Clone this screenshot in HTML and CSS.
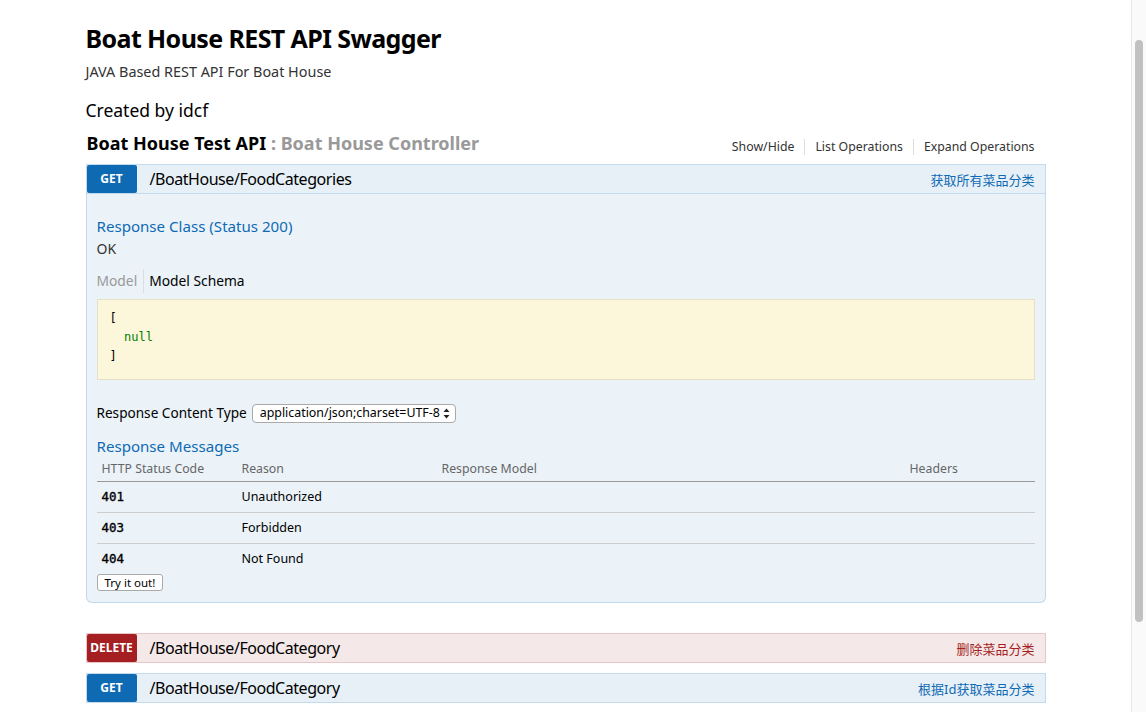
FILE: index.html
```html
<!DOCTYPE html>
<html>
<head>
<meta charset="utf-8">
<title>Boat House REST API Swagger</title>
<link rel="stylesheet" href="styles.css">
</head>
<body>
<div class="page">
  <div class="main">
    <div class="container">
      <h1 class="title">Boat House REST API Swagger</h1>
      <div class="desc">JAVA Based REST API For Boat House</div>
      <div class="created">Created by idcf</div>

      <div class="resource-head">
        <h2 class="resource-title">Boat House Test API <span class="sub">: Boat House Controller</span></h2>
        <ul class="options">
          <li>Show/Hide</li>
          <li>List Operations</li>
          <li>Expand Operations</li>
        </ul>
      </div>

      <div class="op op-get op-open">
        <div class="op-bar">
          <span class="verb">GET</span>
          <span class="path">/BoatHouse/FoodCategories</span>
          <span class="summary">获取所有菜品分类</span>
        </div>
        <div class="op-body">
          <h4 class="h4">Response Class (Status 200)</h4>
          <div class="ok">OK</div>
          <div class="tabs">
            <span class="tab tab-off">Model</span>
            <span class="tab tab-on">Model Schema</span>
          </div>
          <pre class="schema">[
  <span class="null">null</span>
]</pre>
          <div class="ctype">
            <span>Response Content Type</span>
            <span class="select">
              <span class="select-text">application/json;charset=UTF-8</span>
              <svg class="arrows" width="7" height="11" viewBox="0 0 7 11"><path d="M3.5 0.5 L6.5 4 L0.5 4 Z M3.5 10.5 L6.5 7 L0.5 7 Z" fill="#222"/></svg>
            </span>
          </div>
          <h4 class="h4 msgs">Response Messages</h4>
          <table class="codes">
            <thead>
              <tr><th class="c1">HTTP Status Code</th><th class="c2">Reason</th><th class="c3">Response Model</th><th class="c4">Headers</th></tr>
            </thead>
            <tbody>
              <tr><td class="code">401</td><td>Unauthorized</td><td></td><td></td></tr>
              <tr><td class="code">403</td><td>Forbidden</td><td></td><td></td></tr>
              <tr class="last"><td class="code">404</td><td>Not Found</td><td></td><td></td></tr>
            </tbody>
          </table>
          <button class="try">Try it out!</button>
        </div>
      </div>

      <div class="op op-delete">
        <div class="op-bar">
          <span class="verb">DELETE</span>
          <span class="path">/BoatHouse/FoodCategory</span>
          <span class="summary">删除菜品分类</span>
        </div>
      </div>

      <div class="op op-get">
        <div class="op-bar">
          <span class="verb">GET</span>
          <span class="path">/BoatHouse/FoodCategory</span>
          <span class="summary">根据Id获取菜品分类</span>
        </div>
      </div>
    </div>
  </div>
  <div class="scrollbar"><div class="thumb"></div></div>
</div>
</body>
</html>
```

FILE: styles.css
```css
html, body {
  margin: 0;
  padding: 0;
  background: #fff;
}
body {
  font-family: "Noto Sans", "Open Sans", "Noto Sans CJK SC", sans-serif;
  color: #000;
}
.page {
  display: flex;
  height: 712px;
  overflow: hidden;
}
.main {
  flex: 1;
  min-width: 0;
}
.container {
  width: 960px;
  margin: 0 auto;
  padding-top: 22px;
}
.title {
  margin: 0;
  font-size: 25px;
  line-height: 32px;
  letter-spacing: -0.6px;
  font-weight: 700;
  color: #000;
}
.desc {
  margin-top: 8px;
  font-size: 14.4px;
  line-height: 20px;
  color: #333;
}
.created {
  margin-top: 17px;
  font-size: 17.5px;
  line-height: 22px;
  color: #000;
}
.resource-head {
  margin-top: 10px;
  display: flex;
  justify-content: space-between;
  align-items: center;
  height: 24px;
}
.resource-title {
  margin: 0 0 0 1px;
  font-size: 18px;
  line-height: 24px;
  font-weight: 700;
  color: #000;
}
.resource-title .sub {
  color: #999;
}
.options {
  list-style: none;
  margin: 7px 11px 0 0;
  padding: 0;
  display: flex;
  font-size: 12.3px;
  line-height: 16px;
  color: #333;
}
.options li {
  padding: 0 10px;
  border-left: 1px solid #ddd;
}
.options li:first-child {
  border-left: none;
}
.options li:last-child {
  padding-right: 0;
}

.op {
  margin-top: 9px;
}
.op-bar {
  display: flex;
  align-items: center;
  height: 28px;
  border: 1px solid #c3d9ec;
  background: #e7f0f7;
}
.verb {
  width: 50px;
  height: 28px;
  line-height: 28px;
  text-align: center;
  color: #fff;
  font-size: 12px;
  font-weight: 700;
  border-radius: 2px;
  background: #0f6ab4;
}
.path {
  margin-left: 13px;
  font-size: 16px;
  letter-spacing: -0.45px;
  line-height: 22px;
  color: #000;
}
.summary {
  margin-left: auto;
  margin-right: 10px;
  font-family: "Noto Sans", "Noto Sans CJK SC", sans-serif;
  font-size: 13px;
  color: #0f6ab4;
}
.op-body {
  background: #ebf3f9;
  border: 1px solid #c3d9ec;
  border-top: none;
  border-radius: 0 0 6px 6px;
  padding: 22px 10px 11px 10px;
}
.h4 {
  margin: 0;
  font-size: 15.1px;
  line-height: 20px;
  font-weight: 400;
  color: #0f6ab4;
}
.ok {
  margin-top: 4px;
  font-size: 14px;
  line-height: 18px;
  color: #333;
}
.tabs {
  margin-top: 11px;
  display: flex;
  font-size: 13.8px;
  line-height: 24px;
}
.tab-off {
  color: #999;
  padding-right: 6px;
}
.tab-on {
  color: #000;
  padding-left: 5px;
  border-left: 1px solid #ddd;
}
.schema {
  margin: 6px 0 0 0;
  background: #fcf6db;
  border: 1px solid #e5e0c6;
  padding: 9px 12px 13px 12px;
  font-family: "DejaVu Sans Mono", "Liberation Mono", monospace;
  font-size: 12px;
  line-height: 19px;
  color: #000;
}
.null {
  color: #008000;
}
.ctype {
  margin-top: 23px;
  display: flex;
  align-items: center;
  gap: 5px;
  font-size: 13.6px;
  line-height: 20px;
  color: #000;
}
.select {
  display: flex;
  align-items: center;
  justify-content: space-between;
  box-sizing: border-box;
  width: 204px;
  height: 19px;
  padding: 0 5px 0 7px;
  border: 1px solid #aaa;
  border-radius: 4px;
  background: #fff;
  font-size: 12.4px;
  color: #000;
}
.msgs {
  margin-top: 13px;
}
.codes {
  width: 100%;
  border-collapse: collapse;
  margin-top: 0;
}
.codes th {
  text-align: left;
  font-weight: 400;
  font-size: 12.3px;
  line-height: 16px;
  color: #666;
  padding: 5px 5px 4px 5px;
  border-bottom: 1px solid #999;
}
.codes .c1 { width: 130px; }
.codes .c2 { width: 190px; }
.codes .c3 { width: 458px; }
.codes td {
  font-size: 12.5px;
  line-height: 18px;
  color: #000;
  padding: 6px 5px;
  border-bottom: 1px solid #ccc;
}
.codes tr.last td {
  border-bottom: 1px solid transparent;
}
.codes td.code {
  font-family: "DejaVu Sans Mono", "Liberation Mono", monospace;
  font-size: 12.5px;
  font-weight: 400;
  -webkit-text-stroke: 0.35px #000;
  padding-left: 5px;
}
.try {
  display: block;
  margin: -1px 0 0 0;
  height: 17px;
  padding: 0 7px;
  font-family: "Noto Sans", sans-serif;
  font-size: 11.5px;
  line-height: 15px;
  background: #fff;
  border: 1px solid #aaa;
  border-radius: 3px;
  color: #000;
}
.op-delete {
  margin-top: 30px;
}
.op-delete .op-bar {
  background: #f5e8e8;
  border-color: #e8c6c7;
}
.op-delete .verb {
  background: #a41e22;
}
.op-delete .summary {
  color: #a41e22;
}
.op-delete + .op {
  margin-top: 10px;
}

.scrollbar {
  width: 14px;
  flex: none;
  background: #fafafa;
  border-left: 1px solid #e6e6e6;
  padding-top: 40px;
}
.thumb {
  width: 8px;
  height: 582px;
  margin-left: 3px;
  border-radius: 4px;
  background: #c1c1c1;
}
```
